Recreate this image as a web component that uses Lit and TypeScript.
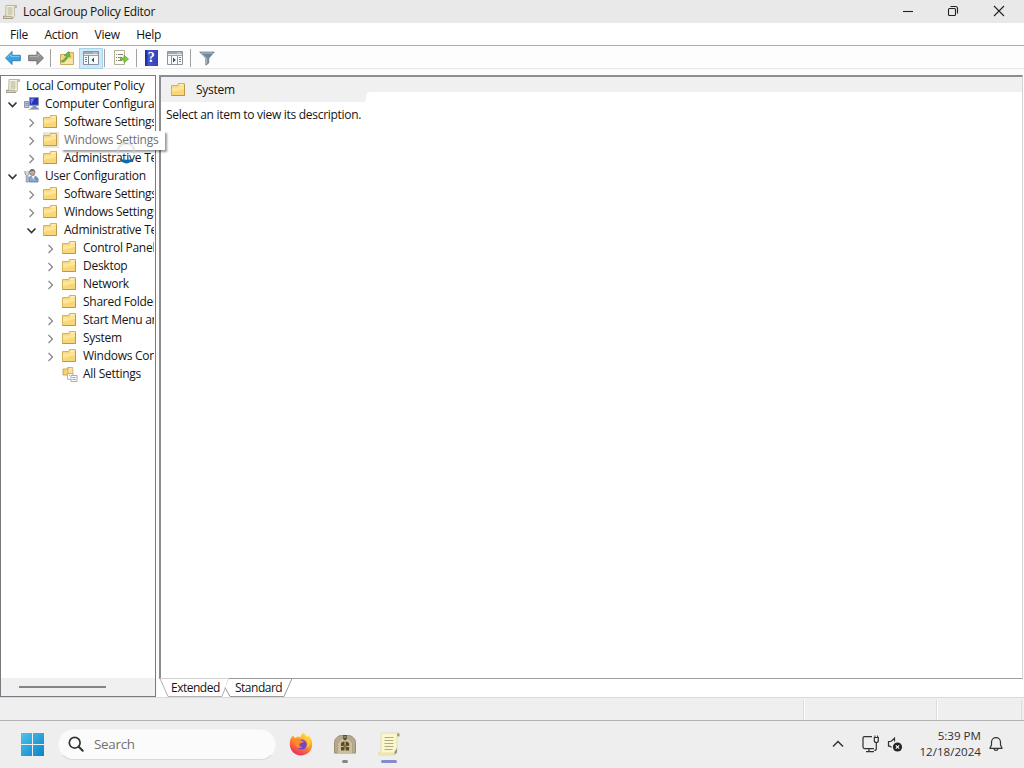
import { LitElement, css, html, nothing, svg } from "lit";
import { customElement } from "lit/decorators.js";
import { classMap } from "lit/directives/class-map.js";

type IconName = "scroll" | "computer" | "user" | "folder" | "settings";

interface TreeNode {
  label: string;
  level: number;
  icon: IconName;
  state?: "open" | "closed";
  hover?: boolean;
}

const TREE: TreeNode[] = [
  { label: "Local Computer Policy", level: 0, icon: "scroll" },
  { label: "Computer Configuration", level: 1, icon: "computer", state: "open" },
  { label: "Software Settings", level: 2, icon: "folder", state: "closed" },
  { label: "Windows Settings", level: 2, icon: "folder", state: "closed", hover: true },
  { label: "Administrative Templates", level: 2, icon: "folder", state: "closed" },
  { label: "User Configuration", level: 1, icon: "user", state: "open" },
  { label: "Software Settings", level: 2, icon: "folder", state: "closed" },
  { label: "Windows Settings", level: 2, icon: "folder", state: "closed" },
  { label: "Administrative Templates", level: 2, icon: "folder", state: "open" },
  { label: "Control Panel", level: 3, icon: "folder", state: "closed" },
  { label: "Desktop", level: 3, icon: "folder", state: "closed" },
  { label: "Network", level: 3, icon: "folder", state: "closed" },
  { label: "Shared Folders", level: 3, icon: "folder" },
  { label: "Start Menu and Taskbar", level: 3, icon: "folder", state: "closed" },
  { label: "System", level: 3, icon: "folder", state: "closed" },
  { label: "Windows Components", level: 3, icon: "folder", state: "closed" },
  { label: "All Settings", level: 3, icon: "settings" },
];

const scrollShapes = svg`
  <path d="M4 1.5h10.5v2h-2.2v9.2l-1.8 1.8H1.5v-2.2h2.2z" fill="#f6f3dc" stroke="#b3af9a" stroke-width=".9" />
  <path d="M12.2 3.5V1.8l2.4.2v2z" fill="#bdb9a4" />
  <path d="M1.5 12.3h8.3l.7 2.2h-9z" fill="#dcd8bd" stroke="#8f8b78" stroke-width=".7" />
  <path d="M5.5 4h5M5.5 6h5M5.5 8h5M5.5 10h5" stroke="#a5a18c" stroke-width=".9" />`;

const folderShapes = svg`
  <path d="M.5 3.5h6l1-2h6v12H.5z" fill="#f7d77d" stroke="#d3ac52" stroke-width=".9" />
  <path d="M8.5 2.3h4v1.3h-4z" fill="#fff6d8" />
  <path d="M1 5.4h6.5l1.2-1.2H13V13H1z" fill="#fde59a" />
  <path d="M1 10 13 7v6H1z" fill="#f9d678" />
  <path d="M.5 13.5h13V3" fill="none" stroke="#bd9440" stroke-width=".9" />`;

const ICONS = {
  scroll: scrollShapes,
  folder: folderShapes,
  computer: svg`
    <path d="M5.5 1.5h9v7.8h-9z" fill="#2333b4" stroke="#8995bd" />
    <path d="M6.5 2.5h4L7 8.5z" fill="#6d86e8" />
    <path d="M8.5 10h4v1.5h2V13h-8v-1.5h2z" fill="#8692aa" />
    <path d="M.5 5.5h4.3v6H.5z" fill="#c7cfdc" stroke="#74829e" stroke-width=".8" />
    <path d="M1.5 7.3h2.4M1.5 9.2h2.4" stroke="#596a8b" stroke-width=".8" />
    <path d="M5 13.5h10" stroke="#b4bccb" />`,
  user: svg`
    <circle cx="8.3" cy="4.4" r="2.8" fill="#c9a89c" stroke="#77706f" stroke-width=".7" />
    <path d="M5.6 3.8c0-3.6 5.2-3.8 5.5 0L9 2.9z" fill="#77706f" />
    <path d="M5 14V9.8c.4-2.4 7.6-3 9 1V14z" fill="#86a9d4" stroke="#587aa6" stroke-width=".8" />
    <path d="m7.8 8 1.4 3.6L10.8 8z" fill="#f7f8ff" />
    <path d="M11 9.5 13.5 12" stroke="#bd4a57" />
    <path d="M1 3v3l1.2 1.2V14H4V7.2L5.2 6V3" fill="#d3d8df" stroke="#768292" stroke-width=".8" />`,
  settings: svg`
    <path d="M1 3h4l.8-1.5H8v7.5H1z" fill="#f6d46e" stroke="#c1943b" stroke-width=".8" />
    <path d="M6 1.5h4.8V9H6z" fill="#fae49b" stroke="#c7a24d" stroke-width=".7" />
    <path d="M5.5 7.5H11v5.8H5.5z" fill="#fff" stroke="#9da3ac" stroke-width=".8" />
    <path d="M9 9.5h6v6H9z" fill="#fff" stroke="#9298a3" stroke-width=".8" />
    <path d="M10.3 11.5h3.4M10.3 13.5h3.4M7 9.3h1" stroke="#7c8ba5" stroke-width=".8" />`,
};

const icon = (name: IconName) =>
  html`<svg class="icon" viewBox="0 0 16 16">${ICONS[name]}</svg>`;

const chevron = (state: "open" | "closed") =>
  state === "open"
    ? html`<svg class="chevron" viewBox="0 0 19 18"><path d="m5.5 7.5 4 4 4-4" fill="none" stroke="#333" stroke-width="1.6" /></svg>`
    : html`<svg class="chevron" viewBox="0 0 19 18"><path d="m7.5 6 4 4-4 4" fill="none" stroke="#8b8b8b" stroke-width="1.35" /></svg>`;

// Console window shapes shared by the two pane toggles.
const paneShapes = svg`
  <path d="M.5 1.5h15v13H.5z" fill="#f8fafc" stroke="#8a959f" />
  <path d="M1 2h14v2.2H1z" fill="#9aa9b6" />
  <path d="M10.5 3h1M12.5 3h1" stroke="#fff" />
  <path d="M1 5.5h14" stroke="#9ba6b1" />`;

@customElement("gp-toolbar")
export class GpToolbar extends LitElement {
  static styles = css`
    :host {
      display: flex;
      align-items: center;
      box-sizing: border-box;
      height: 23px;
      padding: 2px 0 0 3px;
      background: #fdfdfd;
      border-bottom: 1px solid #e7e7e7;
    }
    span {
      display: flex;
      align-items: center;
      justify-content: center;
      flex: none;
      width: 24px;
      height: 21px;
      box-sizing: border-box;
    }
    .back {
      width: 20px;
    }
    .forward {
      width: 26px;
    }
    .active {
      background: #cde8f7;
      border: 1px solid #a5d3ec;
    }
    i {
      width: 1px;
      height: 18px;
      margin: 0 1px;
      background: #a3a3a3;
    }
    .up {
      margin-left: 2px;
      width: 25px;
    }
    .export {
      margin: 0 2px 0 2px;
      width: 25px;
    }
    .help {
      margin-left: 1px;
    }
    .pane {
      margin-right: 2px;
    }
    .filter {
      margin-left: 3px;
    }
    svg {
      width: 16px;
      height: 16px;
    }
    b {
      display: flex;
      align-items: center;
      justify-content: center;
      width: 13px;
      height: 16px;
      color: #fff;
      background: linear-gradient(90deg, #2730a0 2px, #4654cf 3px, #3440b8);
      font: bold 14px "Liberation Serif", serif;
    }
  `;

  render() {
    return html`
      <span class="back">
        <svg viewBox="0 0 16 16">
          <path d="M.6 8 7 1.5v3.8h8.3v5.4H7v3.8z" fill="#31a5e9" stroke="#3a7fb4" />
          <path d="M2.6 7.6 6 4.2v2.2h8.3" fill="none" stroke="#7ccbf3" />
        </svg>
      </span>
      <span class="forward">
        <svg viewBox="0 0 16 16">
          <path d="M15.4 8 9 1.5v3.8H.7v5.4H9v3.8z" fill="#919191" stroke="#6c6c6c" />
          <path d="M1.6 6.4H10V4.2l2.2 2.2" fill="none" stroke="#b5b5b5" />
        </svg>
      </span>
      <i></i>
      <span class="up">
        <svg viewBox="0 0 16 16">
          <path d="M1.5 4.5h6l1-2h6v12h-13z" fill="#f3d67f" stroke="#c9aa62" />
          <path d="M2 9h12v5H2z" fill="#fae6a4" />
          <path d="M2 10.8C5 10 6.5 8 7.5 5.5L5 5.4 10 1.5l1.4 5.7-2-1C8 9.5 6 12 3 12.5z" fill="#69b83f" stroke="#4a8c33" stroke-width=".5" />
        </svg>
      </span>
      <span class="active">
        <svg viewBox="0 0 16 16">
          ${paneShapes}
          <path d="M5.5 5.5v9" stroke="#71808e" />
          <path d="M2 7.5h2M2 9.5h2M2 11.5h2" stroke="#6989a8" />
          <path d="M11 7.5v5L8.5 10z" fill="#3a5064" />
        </svg>
      </span>
      <i></i>
      <span class="export">
        <svg viewBox="0 0 16 16">
          <path d="M1.5.5h10v14h-10z" fill="#fffdf1" stroke="#b2af9d" />
          <path d="M3 4.5h1M5 4.5h5M3 7.5h1M5 7.5h4M3 10.5h1M5 10.5h4" stroke="#85857d" />
          <path d="M7.5 8H11V5.2L15.5 9 11 12.8V10H7.5z" fill="#84c93d" stroke="#5b9f35" stroke-width=".7" />
        </svg>
      </span>
      <i></i>
      <span class="help"><b>?</b></span>
      <span class="pane">
        <svg viewBox="0 0 16 16">
          ${paneShapes}
          <path d="M10.5 5.5v9M4.5 5.5v9" stroke="#8b98a5" />
          <path d="M12 7.5h2M12 9.5h2M12 11.5h2" stroke="#6989a8" />
          <path d="M6 7.5v5L8.8 10z" fill="#3a5064" />
        </svg>
      </span>
      <i></i>
      <span class="filter">
        <svg viewBox="0 0 16 16">
          <path d="M.7 2h14.6L9.8 8.2V13l-3 2.2v-7z" fill="#70879a" stroke="#647a8b" stroke-width=".7" />
          <path d="M2.2 3h11.5" stroke="#b5c4d0" />
          <path d="m3.5 4.3 4.2 3.9v5.5" fill="none" stroke="#adc0d0" />
        </svg>
      </span>
    `;
  }
}

@customElement("gp-tree")
export class GpTree extends LitElement {
  static styles = css`
    :host {
      position: relative;
      display: flex;
      flex-direction: column;
      box-sizing: border-box;
      width: 156px;
      border: 1px solid #777b80;
      background: #fff;
    }
    .rows {
      flex: 1;
      margin-right: 1px;
      padding-top: 1px;
      overflow: hidden;
    }
    .row {
      display: flex;
      align-items: center;
      height: 18px;
      padding-left: 2px;
      white-space: nowrap;
    }
    .row span {
      margin-top: -1px;
    }
    .level-2 {
      padding-left: 21px;
    }
    .level-3 {
      padding-left: 40px;
    }
    .chevron,
    .gap {
      flex: none;
      width: 19px;
      height: 18px;
    }
    .icon {
      flex: none;
      width: 16px;
      height: 16px;
      margin: 0 5px 0 2px;
    }
    .hover .icon {
      background: #e8e5dc;
    }
    .tooltip {
      position: absolute;
      left: 60px;
      top: 55px;
      z-index: 2;
      box-sizing: border-box;
      width: 104px;
      height: 19px;
      padding-left: 3px;
      line-height: 18px;
      white-space: nowrap;
      color: #707070;
      background: #fff;
      box-shadow: 2px 2px 2px #0006;
    }
    .busy {
      position: absolute;
      left: 114px;
      top: 66px;
      z-index: 3;
      width: 22px;
      height: 22px;
    }
    .scrollbar {
      display: flex;
      align-items: center;
      box-sizing: border-box;
      height: 18px;
      padding: 0 0 1px 18px;
      background: #f0f0f0;
    }
    .thumb {
      width: 87px;
      height: 2px;
      background: #858585;
    }
  `;

  private _row(node: TreeNode) {
    const classes = { row: true, [`level-${node.level}`]: true, hover: !!node.hover };
    return html`
      <div class=${classMap(classes)}>
        ${node.state ? chevron(node.state) : node.level ? html`<span class="gap"></span>` : nothing}
        ${icon(node.icon)}
        ${node.hover ? nothing : html`<span>${node.label}</span>`}
      </div>
    `;
  }

  render() {
    return html`
      <div class="rows">${TREE.map((node) => this._row(node))}</div>
      <div class="scrollbar"><div class="thumb"></div></div>
      <div class="tooltip">Windows Settings</div>
      <svg class="busy" viewBox="0 0 22 22">
        <path d="M3.5 12a8 8 0 1 1 15 0" fill="none" stroke="#cfcfcf" stroke-opacity=".5" stroke-width="2.5" />
        <path d="M4.5 16.5C8 23 15 23 18.5 16.5Q11.5 19 4.5 16.5z" fill="#0b69ac" />
      </svg>
    `;
  }
}

@customElement("gp-details")
export class GpDetails extends LitElement {
  static styles = css`
    :host {
      display: flex;
      flex-direction: column;
      flex: 1;
      min-width: 0;
      background: #fff;
    }
    .pane {
      flex: 1;
      box-sizing: border-box;
      margin-right: 1px;
      border: 2px solid #8b8e90;
      border-right: 1px solid #d5d5d5;
      border-bottom: 1px solid #a0a0a0;
    }
    .band {
      height: 15px;
      background: #f0f0f0;
    }
    .heading {
      display: flex;
      align-items: center;
      box-sizing: border-box;
      width: 210px;
      height: 25px;
      padding-left: 10px;
      background: #f0f0f0;
      clip-path: polygon(0 0, 100% 0, 100% 15px, 206px 16px, 204px 25px, 0 25px);
    }
    .icon {
      width: 16px;
      height: 16px;
      margin-right: 9px;
    }
    p {
      margin: 14px 0 0 5px;
      line-height: 18px;
      letter-spacing: -0.29px;
    }
    .tabs {
      position: relative;
      display: flex;
      height: 18px;
      line-height: 18px;
      letter-spacing: -0.5px;
    }
    .tabs svg {
      position: absolute;
      left: 0;
      top: -1px;
      width: 136px;
      height: 20px;
    }
    .tabs span {
      position: relative;
      margin-left: 12px;
      width: 52px;
    }
  `;

  render() {
    return html`
      <div class="pane">
        <div class="band"><div class="heading">${icon("folder")}<span>System</span></div></div>
        <p>Select an item to view its description.</p>
      </div>
      <div class="tabs">
        <svg viewBox="0 0 136 20">
          <path d="M1 .5 9 18.5h54L70 .5" fill="#fff" stroke="#b2b2b2" />
          <path d="M66 9.5 71 18.5h54l8-18H70" fill="#fff" stroke="#9a9a9a" />
        </svg>
        <span>Extended</span><span>Standard</span>
      </div>
    `;
  }
}

@customElement("gp-taskbar")
export class GpTaskbar extends LitElement {
  static styles = css`
    :host {
      display: flex;
      align-items: center;
      box-sizing: border-box;
      height: 48px;
      padding: 0 0 1px 21px;
      border-top: 1px solid #b2b2b2;
      background: #eeeeee;
      color: #303030;
    }
    svg {
      flex: none;
      display: block;
    }
    .start {
      width: 23px;
      height: 23px;
      margin-right: 14px;
    }
    .search {
      display: flex;
      align-items: center;
      box-sizing: border-box;
      width: 218px;
      height: 31px;
      padding-left: 9px;
      gap: 10px;
      border: 1px solid #f4f4f4;
      border-bottom-color: #d9d9d9;
      border-radius: 16px;
      background: #fbfbfb;
      color: #707070;
      font-size: 13.4px;
    }
    .search svg {
      width: 16px;
      height: 16px;
    }
    .apps {
      display: flex;
      margin-left: 3px;
    }
    .app {
      display: flex;
      flex-direction: column;
      align-items: center;
      justify-content: flex-end;
      width: 44px;
      height: 46px;
    }
    .app svg {
      width: 24px;
      height: 24px;
    }
    .mark {
      width: 6px;
      height: 3px;
      margin: 4px 0;
      border-radius: 2px;
    }
    .running {
      background: #858585;
    }
    .current {
      width: 16px;
      background: #858bcb;
    }
    .tray {
      display: flex;
      align-items: center;
      margin-left: auto;
      padding-right: 21px;
    }
    .up {
      width: 12px;
      height: 12px;
      margin-right: 17px;
    }
    .net {
      width: 18px;
      height: 18px;
      margin-right: 8px;
    }
    .sound {
      width: 16px;
      height: 16px;
      margin-right: 16px;
    }
    .clock {
      width: 62px;
      margin-right: 8px;
      white-space: nowrap;
      display: flex;
      flex-direction: column;
      align-items: flex-end;
      font-size: 11.6px;
      letter-spacing: 0;
      line-height: 16px;
    }
    .bell {
      width: 14px;
      height: 16px;
    }
  `;

  render() {
    return html`
      <svg class="start" viewBox="0 0 23 23">
        <defs>
          <linearGradient id="win" x1="0" y1="0" x2="1" y2="1">
            <stop stop-color="#4dc2e9" />
            <stop offset="1" stop-color="#0c83ca" />
          </linearGradient>
        </defs>
        <path d="M0 0h11v11H0zM12 0h11v11H12zM0 12h11v11H0zM12 12h11v11H12z" fill="url(#win)" />
      </svg>
      <div class="search">
        <svg viewBox="0 0 16 16">
          <circle cx="6.7" cy="6.7" r="5.4" fill="none" stroke="#333" stroke-width="1.7" />
          <path d="m10.7 10.7 4 4" stroke="#333" stroke-width="2" stroke-linecap="round" />
        </svg>
        <span>Search</span>
      </div>
      <div class="apps">
        <div class="app">
          <svg viewBox="0 0 24 24">
            <defs>
              <linearGradient id="fox" x1=".8" y1="0" x2=".3" y2="1">
                <stop stop-color="#fff13d" />
                <stop offset=".45" stop-color="#ff9828" />
                <stop offset="1" stop-color="#ed2860" />
              </linearGradient>
            </defs>
            <path d="M2 6 4 3.5 6 6l3-1.6L11.5 5C12 2.8 13.3 1.3 15 .5c.2 2.1 2.1 3 3.8 4.7l.4-1.7C22 6 23.5 9 23.2 13 22.8 19 18 23.4 12 23.4 5.5 23.4.8 18.5.8 12.3.8 9.8 1 8 2 6z" fill="url(#fox)" />
            <circle cx="12.7" cy="12.6" r="5" fill="#7546c6" />
            <path d="M5 7c2.4-1.3 4.8-.5 6.7 1.4l3.2.8c-.7 1.7-3 1.8-4.2 2.2-.9 1.8.2 3.9 2.8 3.4-2 2-5.5 1.4-6.8-1.4z" fill="#ff8b23" />
            <path d="M15 5.5c4 2 5.3 7 2.5 10.4 3.4-1 4.6-6 1.3-9.6z" fill="#ffd13c" />
          </svg>
          <div class="mark"></div>
        </div>
        <div class="app">
          <svg viewBox="0 0 24 24">
            <path d="M1.5 21V10.5c0-3.5 3.5-7 7-7h7c3.5 0 7 3.5 7 7V21z" fill="#b7a98c" stroke="#9b8d74" />
            <path d="M4.5 21v-9.5l4-5h7l4 5V21" fill="#cdc0a1" stroke="#a99c81" stroke-width=".7" />
            <path d="M10.2 3h3.6v4.2L12 8.6l-1.8-1.4z" fill="#554e45" />
            <circle cx="12" cy="5" r=".8" fill="#c9bfa8" />
            <path d="M8 11.5c0-.8 1.3-1.7 3.5-2V14H8zm4.6-2c2.2.3 3.5 1.2 3.5 2V14h-3.5zM8 15h3.5v3.5H8zm4.6 0h3.5v3.5h-3.5z" fill="#5b4a25" />
            <path d="M10.5 12.7h3v3.2h-3z" fill="#8b7134" />
          </svg>
          <div class="mark running"></div>
        </div>
        <div class="app">
          <svg viewBox="0 0 24 24">
            <path d="M4 1h18c1 0 1.3 2.5 0 3h-2v16.5L17.5 23H1.5v-2.6H4z" fill="#fbf7ca" stroke="#dcd6b0" stroke-width=".8" />
            <path d="M20 4V1.4h2.4v3zM17.3 20v3l2.7-2.5V16z" fill="#9b978b" />
            <path d="M1.5 20.4h15.8V23H1.5z" fill="#eee6af" />
            <path d="M7.5 5.5h9M7.5 8.5h9M7.5 11.5h9M7.5 14.5h9M7.5 17.5h8" stroke="#aeaa90" />
          </svg>
          <div class="mark current"></div>
        </div>
      </div>
      <div class="tray">
        <svg class="up" viewBox="0 0 12 12"><path d="m1 8.5 5-5 5 5" fill="none" stroke="#333" stroke-width="1.5" /></svg>
        <svg class="net" viewBox="0 0 18 18">
          <path d="M11 1.5H3.5a1.5 1.5 0 0 0-1.5 1.5v9a1.5 1.5 0 0 0 1.5 1.5H13M8 14v2.5M5 16.5h8" fill="none" stroke="#333" stroke-width="1.25" />
          <path d="M13.3 2.5h4v3a2 2 0 0 1-4 0zM15.3 7.5v6q0 2-2 2" fill="none" stroke="#333" stroke-width="1.2" />
          <path d="M14 .5v2M16.6.5v2" stroke="#333" />
        </svg>
        <svg class="sound" viewBox="0 0 16 16">
          <path d="M7.5 5.5V2.2L4 5.5H1.5v4.7H3l1.5 1.2" fill="none" stroke="#333" stroke-width="1.2" />
          <circle cx="10.5" cy="11" r="4.6" fill="#252525" />
          <path d="m8.8 9.3 3.4 3.4m0-3.4-3.4 3.4" stroke="#fff" stroke-width="1.1" />
        </svg>
        <div class="clock"><span>5:39 PM</span><span>12/18/2024</span></div>
        <svg class="bell" viewBox="0 0 14 16">
          <path d="M2.5 9V6.2a4.5 4.5 0 0 1 9 0V9l1.6 3.3H.9z" fill="none" stroke="#333" stroke-width="1.2" stroke-linejoin="round" />
          <path d="M5 12.8c.4 2.2 3.6 2.2 4 0" fill="none" stroke="#333" stroke-width="1.2" />
        </svg>
      </div>
    `;
  }
}

@customElement("app-root")
export class AppRoot extends LitElement {
  static styles = css`
    :host {
      display: flex;
      flex-direction: column;
      width: 1024px;
      height: 768px;
      overflow: hidden;
      background: #fff;
      color: #151515;
      font: 12px "Open Sans", "Noto Sans", sans-serif;
      letter-spacing: -0.27px;
    }
    .title {
      display: flex;
      align-items: center;
      height: 23px;
      background: #e8e9e8;
    }
    .title .icon {
      width: 16px;
      height: 16px;
      margin: 0 5px 0 2px;
    }
    .title span {
      letter-spacing: -0.3px;
    }
    .buttons {
      display: flex;
      margin-left: auto;
      margin-right: 19px;
      padding-bottom: 2px;
      gap: 34px;
    }
    .buttons svg {
      width: 12px;
      height: 12px;
      fill: none;
      stroke: #222;
      stroke-width: 1.1;
    }
    .menu {
      display: flex;
      align-items: center;
      box-sizing: border-box;
      height: 23px;
      padding-left: 10px;
      gap: 16.5px;
      border-bottom: 1px solid #ababab;
      letter-spacing: -0.27px;
    }
    .panes {
      display: flex;
      flex: 1;
      min-height: 0;
      gap: 3px;
      padding-top: 6px;
      background: #fcfcfc;
    }
    .status {
      display: flex;
      justify-content: flex-end;
      box-sizing: border-box;
      height: 23px;
      padding: 2px 2px 0 0;
      border-top: 1px solid #dadada;
      background: #efefef;
    }
    .status div {
      width: 132px;
      border-left: 1px solid #dcdcdc;
      box-shadow: inset 1px 0 #fff;
    }
    .status .small {
      width: 84px;
      border-right: 1px solid #dcdcdc;
    }
  `;

  render() {
    return html`
      <div class="title">
        ${icon("scroll")}<span>Local Group Policy Editor</span>
        <div class="buttons">
          <svg viewBox="0 0 12 12"><path d="M2 6.5h10" /></svg>
          <svg viewBox="0 0 12 12">
            <rect x="1.5" y="3.5" width="7" height="7" rx="1" />
            <path d="M3.5 1.5h5a2 2 0 0 1 2 2v5" />
          </svg>
          <svg viewBox="0 0 12 12"><path d="m1 1 10 10M11 1 1 11" /></svg>
        </div>
      </div>
      <div class="menu"><span>File</span><span>Action</span><span>View</span><span>Help</span></div>
      <gp-toolbar></gp-toolbar>
      <div class="panes">
        <gp-tree></gp-tree>
        <gp-details></gp-details>
      </div>
      <div class="status"><div></div><div class="small"></div></div>
      <gp-taskbar></gp-taskbar>
    `;
  }
}
